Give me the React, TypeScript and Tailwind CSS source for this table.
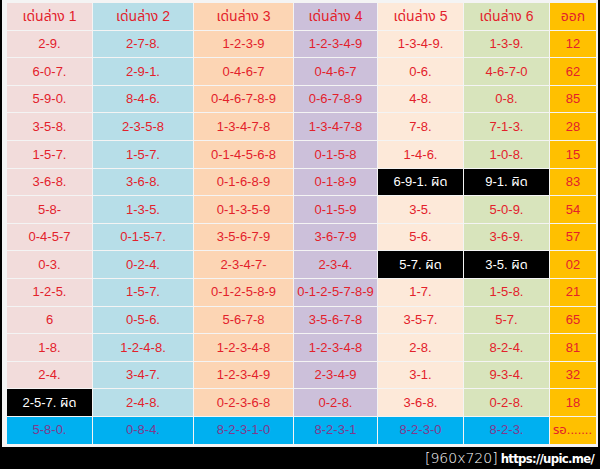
import React from "react";

// ========================
// LOTTERY TABLE (เด่นล่าง)
// ========================

type Cell = string | { text: string; wrong: true };

const headers = [
  "เด่นล่าง 1",
  "เด่นล่าง 2",
  "เด่นล่าง 3",
  "เด่นล่าง 4",
  "เด่นล่าง 5",
  "เด่นล่าง 6",
  "ออก",
];

const w = (text: string): Cell => ({ text, wrong: true });

const rows: Cell[][] = [
  ["2-9.", "2-7-8.", "1-2-3-9", "1-2-3-4-9", "1-3-4-9.", "1-3-9.", "12"],
  ["6-0-7.", "2-9-1.", "0-4-6-7", "0-4-6-7", "0-6.", "4-6-7-0", "62"],
  ["5-9-0.", "8-4-6.", "0-4-6-7-8-9", "0-6-7-8-9", "4-8.", "0-8.", "85"],
  ["3-5-8.", "2-3-5-8", "1-3-4-7-8", "1-3-4-7-8", "7-8.", "7-1-3.", "28"],
  ["1-5-7.", "1-5-7.", "0-1-4-5-6-8", "0-1-5-8", "1-4-6.", "1-0-8.", "15"],
  ["3-6-8.", "3-6-8.", "0-1-6-8-9", "0-1-8-9", w("6-9-1. ผิด"), w("9-1. ผิด"), "83"],
  ["5-8-", "1-3-5.", "0-1-3-5-9", "0-1-5-9", "3-5.", "5-0-9.", "54"],
  ["0-4-5-7", "0-1-5-7.", "3-5-6-7-9", "3-6-7-9", "5-6.", "3-6-9.", "57"],
  ["0-3.", "0-2-4.", "2-3-4-7-", "2-3-4.", w("5-7. ผิด"), w("3-5. ผิด"), "02"],
  ["1-2-5.", "1-5-7.", "0-1-2-5-8-9", "0-1-2-5-7-8-9", "1-7.", "1-5-8.", "21"],
  ["6", "0-5-6.", "5-6-7-8", "3-5-6-7-8", "3-5-7.", "5-7.", "65"],
  ["1-8.", "1-2-4-8.", "1-2-3-4-8", "1-2-3-4-8", "2-8.", "8-2-4.", "81"],
  ["2-4.", "3-4-7.", "1-2-3-4-9", "2-3-4-9", "3-1.", "9-3-4.", "32"],
  [w("2-5-7. ผิด"), "2-4-8.", "0-2-3-6-8", "0-2-8.", "3-6-8.", "0-2-8.", "18"],
];

const footer = ["5-8-0.", "0-8-4.", "8-2-3-1-0", "8-2-3-1", "8-2-3-0", "8-2-3."];

const colBg = [
  "bg-[#f2dcdb]",
  "bg-[#b7dee8]",
  "bg-[#fcd5b4]",
  "bg-[#ccc0da]",
  "bg-[#fde9d9]",
  "bg-[#d8e4bc]",
  "bg-[#ffc000]",
];

export default function App() {
  return (
    <div
      className="w-[600px] h-[469px] bg-black flex flex-col"
      style={{ fontFamily: '"Liberation Sans", "Noto Sans Thai", "Noto Sans", sans-serif' }}
    >
      <div className="ml-[2px] mr-[2px] bg-[#f4f4f4] pl-[5px] pr-[2px] pt-[3px] pb-[3px]">
        <div className="grid grid-cols-[85px_100px_99px_83px_85px_85px_46px] auto-rows-[26.6px] gap-px bg-[#f4f4f4] text-[13px]">
          {headers.map((h, i) => (
            <div
              key={h}
              className={`${colBg[i]} flex items-center justify-center text-[#e3212b] text-[14px]`}
            >
              {h}
            </div>
          ))}

          {rows.map((row, r) =>
            row.map((cell, c) =>
              typeof cell === "string" ? (
                <div
                  key={`${r}-${c}`}
                  className={`${colBg[c]} flex items-center justify-center text-[#e3212b]`}
                >
                  {cell}
                </div>
              ) : (
                <div
                  key={`${r}-${c}`}
                  className="bg-black flex items-center justify-center text-white"
                >
                  {cell.text}
                </div>
              ),
            ),
          )}

          {footer.map((f, i) => (
            <div
              key={`f-${i}`}
              className="bg-[#00b0f0] flex items-center justify-center text-[#80398c]"
            >
              {f}
            </div>
          ))}
          <div className="bg-[#ffc000] flex items-center pl-[3px] text-[#e3212b]">
            รอ.......
          </div>
        </div>
      </div>

      {/* watermark */}
      <div className="flex-1 flex items-center justify-end pr-[6px] pt-[1px] text-white leading-none whitespace-nowrap">
        <span
          className="text-[14px]"
          style={{ fontFamily: '"DejaVu Sans", sans-serif', fontWeight: 200 }}
        >
          [960x720]
        </span>
        <span
          className="ml-[3px] text-[13px] font-bold tracking-[-0.7px]"
          style={{ fontFamily: '"Liberation Sans Narrow", "DejaVu Sans Condensed", sans-serif' }}
        >
          https://upic.me/
        </span>
      </div>
    </div>
  );
}
